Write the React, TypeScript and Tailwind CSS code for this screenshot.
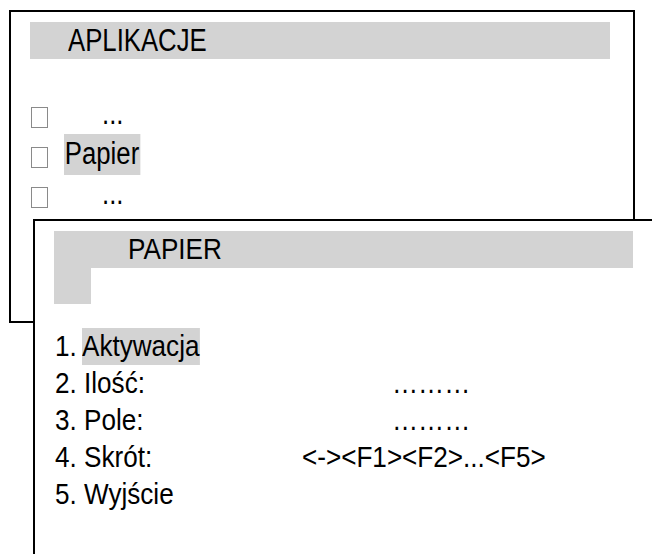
import React from "react";

const font = { fontFamily: "'Liberation Sans', Arial, sans-serif" };

function Box() {
  return <span className="block w-[17px] h-[21px] border border-[#8a8a8a] mt-[13px] shrink-0" />;
}

function O({ children, className = "" }: { children: React.ReactNode; className?: string }) {
  return <span className={"inline-block whitespace-nowrap origin-left scale-x-[0.83] " + className}>{children}</span>;
}

function I({ children, className = "" }: { children: React.ReactNode; className?: string }) {
  return <span className={"inline-block whitespace-nowrap origin-left scale-x-[0.9] " + className}>{children}</span>;
}

export default function App() {
  return (
    <div className="relative w-[652px] h-[554px] bg-white overflow-hidden text-black" style={font}>
      {/* outer window */}
      <div className="absolute left-[9px] top-[10px] w-[626px] h-[313px] border-2 border-black bg-white text-[31px]">
        <div className="ml-[19px] mt-[10px] w-[580px] h-[37px] bg-[#d3d3d3] leading-[37px] pl-[38px]">
          <O>APLIKACJE</O>
        </div>
        <div className="mt-[35px] ml-[20px] flex flex-col leading-[40px]">
          <div className="flex h-[40px]">
            <Box />
            <span className="ml-[54px]"><O>...</O></span>
          </div>
          <div className="flex h-[40px]">
            <Box />
            <span className="ml-[16px]"><O className="bg-[#d3d3d3] px-[1px] h-[41px]">Papier</O></span>
          </div>
          <div className="flex h-[40px]">
            <Box />
            <span className="ml-[54px]"><O>...</O></span>
          </div>
        </div>
      </div>
      {/* inner window */}
      <div className="absolute left-[33px] top-[219px] w-[660px] h-[400px] border-2 border-black bg-white text-[29px]">
        <div className="ml-[19px] mt-[10px] w-[579px] h-[37px] bg-[#d3d3d3] leading-[37px] pl-[74px]">
          <I>PAPIER</I>
        </div>
        <div className="ml-[19px] w-[37px] h-[36px] bg-[#d3d3d3]" />
        <div className="mt-[24px] ml-[20px] flex flex-col leading-[37px]">
          <div className="flex h-[37px]">
            <span className="w-[27px]"><I>1.</I></span>
            <span><I className="bg-[#d3d3d3] h-[37px]">Aktywacja</I></span>
          </div>
          <div className="flex h-[37px]">
            <span className="w-[337px]"><I>2. Ilość:</I></span>
            <span><I>………</I></span>
          </div>
          <div className="flex h-[37px]">
            <span className="w-[337px]"><I>3. Pole:</I></span>
            <span><I>………</I></span>
          </div>
          <div className="flex h-[37px]">
            <span className="w-[247px]"><I>4. Skrót:</I></span>
            <span><I>&lt;-&gt;&lt;F1&gt;&lt;F2&gt;...&lt;F5&gt;</I></span>
          </div>
          <div className="flex h-[37px]">
            <span><I>5. Wyjście</I></span>
          </div>
        </div>
      </div>
    </div>
  );
}
